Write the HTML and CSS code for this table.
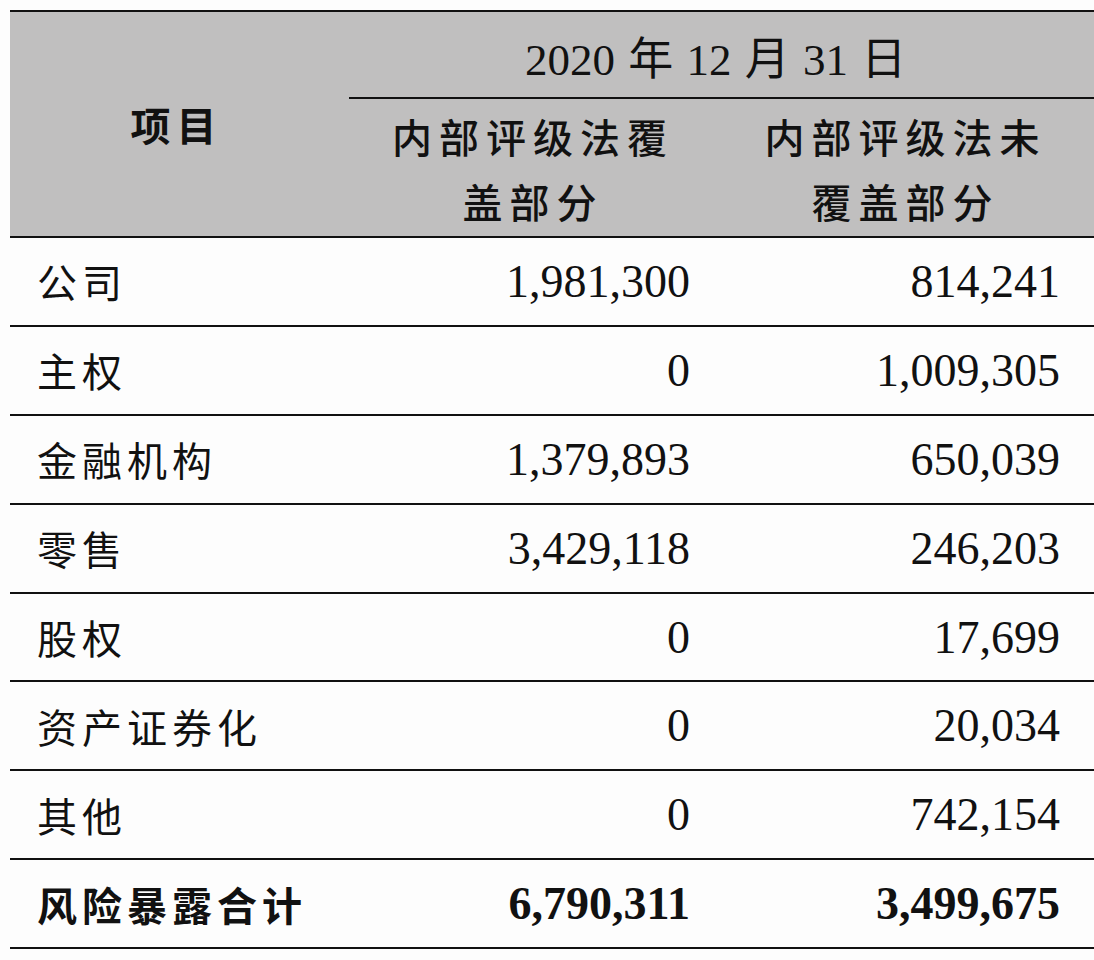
FILE: index.html
```html
<!DOCTYPE html>
<html lang="zh-CN">
<head>
<meta charset="utf-8">
<title>风险暴露</title>
<link rel="stylesheet" href="styles.css">
</head>
<body>
<table class="exp">
  <colgroup>
    <col class="c1"><col class="c2"><col class="c3">
  </colgroup>
  <thead>
    <tr class="h1">
      <th rowspan="2" class="item">项目</th>
      <th colspan="2" class="date">2020 年 12 月 31 日</th>
    </tr>
    <tr class="h2">
      <th class="sub">内部评级法覆<br>盖部分</th>
      <th class="sub">内部评级法未<br>覆盖部分</th>
    </tr>
  </thead>
  <tbody>
    <tr><td class="lbl">公司</td><td class="num n2">1,981,300</td><td class="num n3">814,241</td></tr>
    <tr><td class="lbl">主权</td><td class="num n2">0</td><td class="num n3">1,009,305</td></tr>
    <tr><td class="lbl">金融机构</td><td class="num n2">1,379,893</td><td class="num n3">650,039</td></tr>
    <tr><td class="lbl">零售</td><td class="num n2">3,429,118</td><td class="num n3">246,203</td></tr>
    <tr><td class="lbl">股权</td><td class="num n2">0</td><td class="num n3">17,699</td></tr>
    <tr><td class="lbl">资产证券化</td><td class="num n2">0</td><td class="num n3">20,034</td></tr>
    <tr><td class="lbl">其他</td><td class="num n2">0</td><td class="num n3">742,154</td></tr>
    <tr class="total"><td class="lbl">风险暴露合计</td><td class="num n2">6,790,311</td><td class="num n3">3,499,675</td></tr>
  </tbody>
</table>
</body>
</html>
```
FILE: styles.css
```css
html, body {
  margin: 0;
  padding: 0;
  background: #fdfdfd;
}
body {
  padding-top: 10px;
  padding-left: 10px;
  color: #111;
  font-family: "Liberation Serif", "Noto Sans CJK SC", serif;
}
.exp {
  width: 1084px;
  border-collapse: separate;
  border-spacing: 0;
  table-layout: fixed;
  border-top: 2px solid #111;
}
.c1 { width: 339px; }
.c2 { width: 368px; }
.c3 { width: 377px; }

.exp thead th {
  background: #c0bfbf;
  padding: 0;
  font-weight: 700;
}
.h1 th { height: 83px; }
.item {
  border-bottom: 2px solid #111;
  font-family: "Noto Sans CJK SC", sans-serif;
  font-size: 40px;
  letter-spacing: 6px;
  padding-right: 6px !important;
}
.date {
  border-bottom: 2px solid #111;
  font-size: 45px;
  font-weight: 400 !important;
  word-spacing: 2px;
  padding-top: 2px !important;
  padding-right: 12px !important;
  font-family: "Liberation Serif", "Noto Sans CJK SC", serif;
}
.h2 th { height: 135px; }
.sub {
  border-bottom: 2px solid #111;
  font-family: "Noto Sans CJK SC", sans-serif;
  font-size: 40px;
  line-height: 65px;
  letter-spacing: 7px;
  font-weight: 500 !important;
  padding-top: 2px !important;
}
.exp tbody td {
  height: 86.9px;
  padding: 0;
  border-bottom: 2px solid #111;
}
.lbl {
  padding-left: 27px !important;
  font-family: "Noto Sans CJK SC", sans-serif;
  font-size: 40px;
  letter-spacing: 5px;
  font-weight: 400;
}
.num {
  text-align: right;
  font-size: 46px;
}
.n2 { padding-right: 27px !important; }
.n3 { padding-right: 34px !important; }
.total .lbl { font-weight: 700; }
.total .num { font-weight: 700; }
```
